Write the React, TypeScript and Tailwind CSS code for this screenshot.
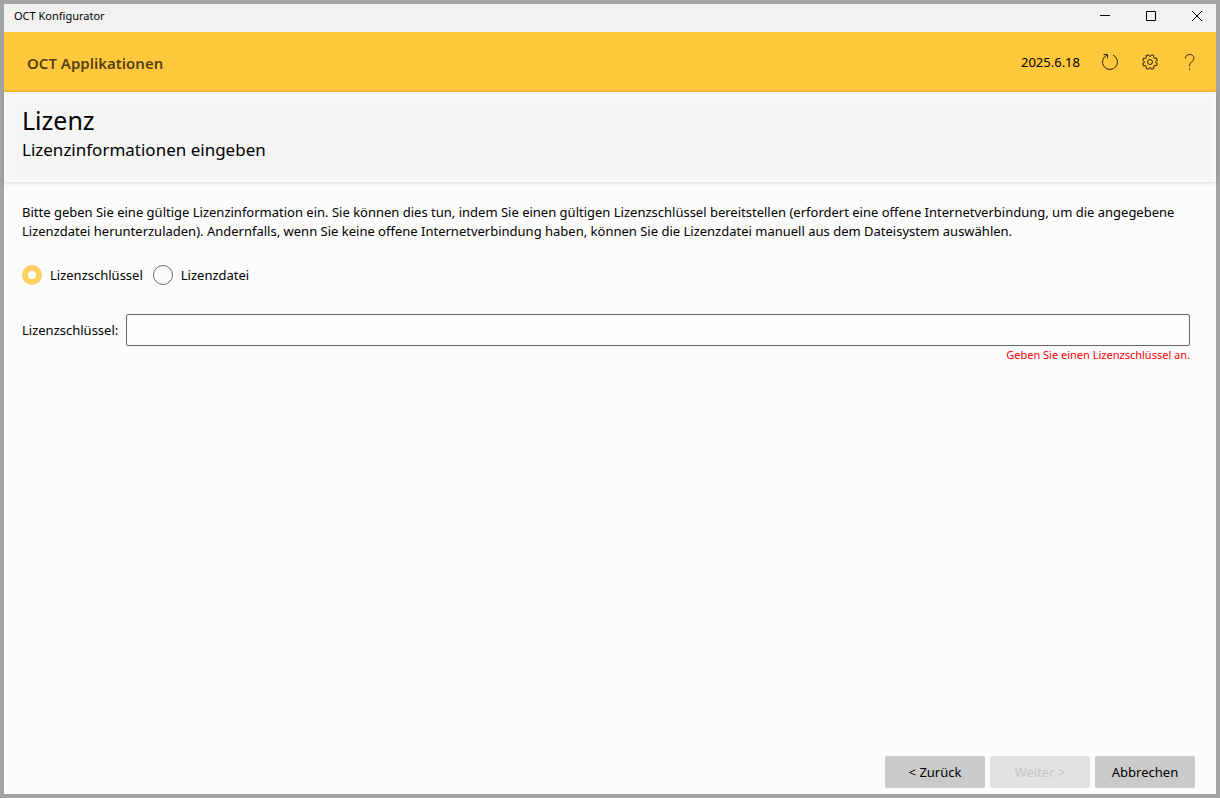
import { useState } from 'react';
import type { ReactNode } from 'react';

// ─── Icons ───────────────────────────────────────────────────────────────────

function RefreshIcon() {
  return (
    <svg viewBox="0 0 18 18" className="h-4.5 w-4.5" fill="none" stroke="currentColor">
      <path d="M12 2.1A7.5 7.5 0 1 1 6 2.1" />
      <path d="M2.5 1.5H6.5V5.5" />
    </svg>
  );
}

const GEAR_TEETH = [0, 45, 90, 135, 180, 225, 270, 315];

function GearIcon() {
  return (
    <svg viewBox="-9 -9 18 18" className="h-4.5 w-4.5" fill="none" stroke="currentColor" strokeLinejoin="round">
      {GEAR_TEETH.map((angle) => (
        <path key={angle} transform={`rotate(${angle})`} d="M-.94-5.93Q0-5.5.94-5.93L1.69-7.31 3.97-6.36 3.53-4.85" />
      ))}
      <circle r="2.5" />
    </svg>
  );
}

function HelpIcon() {
  return (
    <svg viewBox="0 0 18 18" className="h-4.5 w-4.5" fill="none" stroke="currentColor">
      <path d="M4.5 5.5C4.5 2.8 6.3 1.5 8.7 1.5S13 3 13 5.3C13 8.6 8.5 8.8 8.5 12.5V13.5" />
      <path d="M8.5 15.5V17" />
    </svg>
  );
}

// ─── Controls ────────────────────────────────────────────────────────────────

function CaptionButton({ label, children }: { label: string; children: ReactNode }) {
  return (
    <button aria-label={label} className="flex w-[46px] items-center justify-center hover:bg-black/5">
      <svg viewBox="0 0 12 12" className="h-3 w-3" fill="none" stroke="currentColor">
        {children}
      </svg>
    </button>
  );
}

function HeaderButton({ label, children }: { label: string; children: ReactNode }) {
  return (
    <button aria-label={label} className="flex h-10 w-10 items-center justify-center text-black/80 hover:bg-black/5">
      {children}
    </button>
  );
}

interface RadioOptionProps {
  label: string;
  checked: boolean;
  onSelect: () => void;
}

function RadioOption({ label, checked, onSelect }: RadioOptionProps) {
  return (
    <label className="flex items-center gap-2">
      <input
        type="radio"
        name="license-source"
        checked={checked}
        onChange={onSelect}
        className="h-5 w-5 appearance-none rounded-full border border-[#6b6b6b] checked:border-6 checked:border-[#ffd161] checked:bg-white"
      />
      {label}
    </label>
  );
}

function WizardButton({ children, disabled }: { children: ReactNode; disabled?: boolean }) {
  return (
    <button
      disabled={disabled}
      className="h-8 w-25 rounded-xs bg-[#cacaca] hover:bg-[#bdbdbd] disabled:bg-[#e2e2e2] disabled:text-[#c6c6c6]"
    >
      {children}
    </button>
  );
}

// ─── App ─────────────────────────────────────────────────────────────────────

export default function App() {
  const [source, setSource] = useState<'key' | 'file'>('key');
  const [licenseKey, setLicenseKey] = useState('');

  return (
    <div className="flex min-h-screen flex-col border-4 border-[#a3a3a3] bg-[#fcfcfc] font-['Segoe_UI','Noto_Sans',sans-serif] text-[13px] leading-[19px] text-black">
      <div className="flex h-7 justify-between bg-[#f1f1f1] pl-2.5">
        <span className="self-center pb-1.5 text-[11px]">OCT Konfigurator</span>
        <div className="-mr-1 flex pb-1">
          <CaptionButton label="Minimieren">
            <path d="M1 5.5H11" />
          </CaptionButton>
          <CaptionButton label="Maximieren">
            <path d="M1.5 1.5H10.5V10.5H1.5Z" />
          </CaptionButton>
          <CaptionButton label="Schließen">
            <path d="M1 1L11 11M11 1L1 11" />
          </CaptionButton>
        </div>
      </div>

      <header className="flex h-15 items-center justify-between bg-[#ffc83d] pr-1.5 pl-[23px] shadow-[inset_0_-3px_3px_-2px_#0000001a]">
        <span className="pt-0.5 text-[15px] font-semibold text-black/70">OCT Applikationen</span>
        <div className="flex items-center">
          <span className="mr-2.5">2025.6.18</span>
          <HeaderButton label="Aktualisieren">
            <RefreshIcon />
          </HeaderButton>
          <HeaderButton label="Einstellungen">
            <GearIcon />
          </HeaderButton>
          <HeaderButton label="Hilfe">
            <HelpIcon />
          </HeaderButton>
        </div>
      </header>

      <div className="h-[90px] bg-[#f5f5f5] px-[18px] pt-3 shadow-[inset_0_0_6px_3px_#f9f9f9,0_1px_4px_#00000026]">
        <h1 className="text-[25px] leading-[33px]">Lizenz</h1>
        <h2 className="text-[17px] leading-[25px]">Lizenzinformationen eingeben</h2>
      </div>

      <main className="flex grow flex-col px-[18px] pt-[21px]">
        <p>
          Bitte geben Sie eine gültige Lizenzinformation ein. Sie können dies tun, indem Sie einen gültigen
          Lizenzschlüssel bereitstellen (erfordert eine offene Internetverbindung, um die angegebene Lizenzdatei
          herunterzuladen). Andernfalls, wenn Sie keine offene Internetverbindung haben, können Sie die Lizenzdatei
          manuell aus dem Dateisystem auswählen.
        </p>

        <div className="mt-6 flex gap-2.5">
          <RadioOption label="Lizenzschlüssel" checked={source === 'key'} onSelect={() => setSource('key')} />
          <RadioOption label="Lizenzdatei" checked={source === 'file'} onSelect={() => setSource('file')} />
        </div>

        <div className="mt-[29px] mr-2 flex items-center gap-2">
          <label htmlFor="license">{source === 'key' ? 'Lizenzschlüssel:' : 'Lizenzdatei:'}</label>
          <input
            id="license"
            type="text"
            value={licenseKey}
            onChange={(e) => setLicenseKey(e.target.value)}
            className="h-8 grow rounded-xs border border-[#666666] bg-[#fdfdfd] px-2 outline-none"
          />
        </div>
        {!licenseKey && (
          <p className="mr-2 text-right text-[11px] leading-[18px] text-[#ff0000]">Geben Sie einen Lizenzschlüssel an.</p>
        )}
      </main>

      <footer className="flex justify-end gap-[5px] pr-[21px] pb-1.5">
        <WizardButton>&lt; Zurück</WizardButton>
        <WizardButton disabled>Weiter &gt;</WizardButton>
        <WizardButton>Abbrechen</WizardButton>
      </footer>
    </div>
  );
}
